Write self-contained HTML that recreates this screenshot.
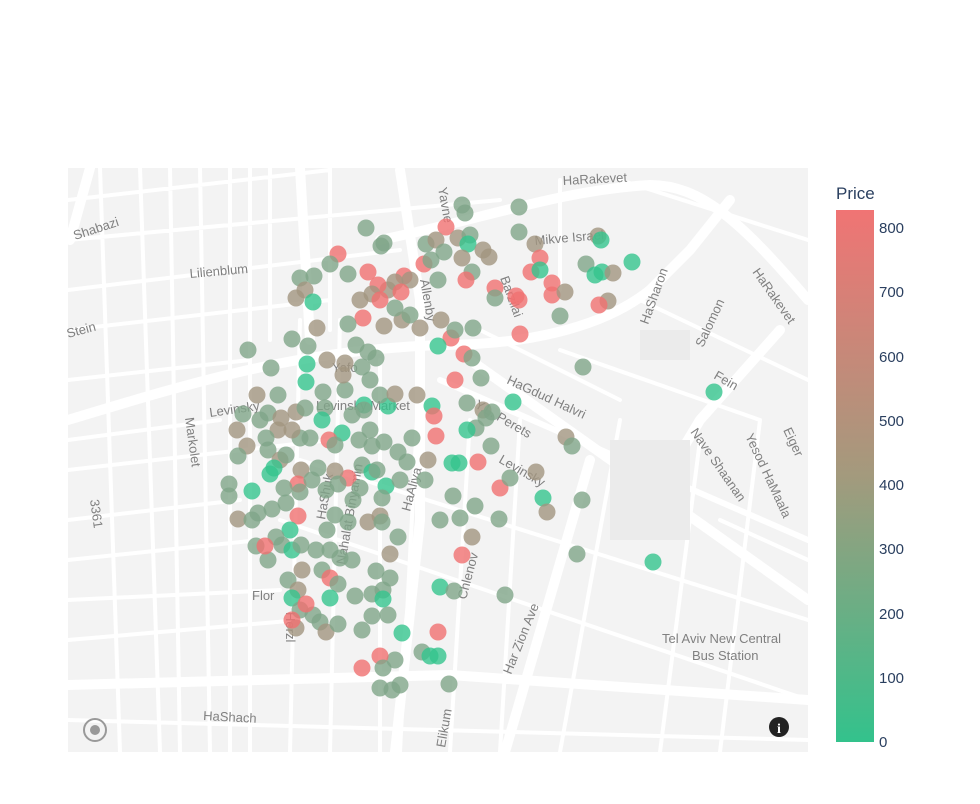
<!DOCTYPE html>
<html><head><meta charset="utf-8"><style>
body{margin:0;background:#fff;width:980px;height:804px;overflow:hidden;font-family:"Liberation Sans",sans-serif}
</style></head><body>
<svg width="980" height="804" viewBox="0 0 980 804" style="position:absolute;left:0;top:0">
<defs>
<linearGradient id="cb" x1="0" y1="0" x2="0" y2="1">
<stop offset="0" stop-color="#f07474"/><stop offset="0.5" stop-color="#a39a7d"/><stop offset="1" stop-color="#33c28c"/>
</linearGradient>
<clipPath id="mc"><rect x="68" y="168" width="740" height="584"/></clipPath>
</defs>
<rect x="68" y="168" width="740" height="584" fill="#f3f3f3"/>
<g clip-path="url(#mc)" fill="none" stroke="#fff" stroke-linecap="round">
<g stroke-width="4">
<path d="M68 200 L330 170 M68 240 L500 200 M68 290 L400 250 M68 330 L330 300 M68 470 L330 440 M68 520 L240 500 M68 560 L260 540 M68 600 L280 590 M68 640 L300 620 M68 720 L808 740 M140 168 L160 752 M100 168 L120 752 M200 168 L210 752 M250 168 L250 752 M300 320 L290 752 M340 320 L330 752 M380 360 L380 752 M420 360 L400 752 M470 420 L450 752 M520 420 L500 752 M620 420 L560 752 M700 440 L660 752 M760 420 L720 752 M300 460 L808 620 M280 520 L808 700 M480 330 L620 400 M560 350 L760 420 M620 180 L808 240 M560 180 L560 290 M330 168 L330 330 M270 168 L270 340 M640 300 L808 380 M720 520 L808 560 M68 380 L250 360 M68 440 L220 420 M170 168 L180 752 M230 168 L230 752"/>
</g>
<g stroke-width="10">
<path d="M68 420 C 200 380, 300 350, 440 345 C 520 345, 600 330, 650 290"/>
<path d="M380 240 C 480 220, 560 190, 650 185 C 700 185, 740 220, 808 300"/>
<path d="M470 360 L808 600"/>
<path d="M590 460 L505 752"/>
<path d="M68 685 L450 675 L808 700"/>
<path d="M650 290 L690 250 L730 200"/>
<path d="M780 330 L700 420 L640 520"/>
<path d="M400 170 L420 300 L420 520 L395 752"/>
<path d="M300 168 L310 340"/>
<path d="M90 168 L70 240"/>
<path d="M440 380 L808 540" stroke-width="6"/>
</g>
</g>
<rect x="610" y="440" width="80" height="100" fill="#ebebeb" clip-path="url(#mc)"/>
<rect x="640" y="330" width="50" height="30" fill="#ebebeb"/>
<g font-size="13" fill="#808080" font-family="'Liberation Sans',sans-serif">
<text x="75" y="240" transform="rotate(-18 75 240)">Shabazi</text>
<text x="190" y="278" transform="rotate(-5 190 278)">Lilienblum</text>
<text x="68" y="338" transform="rotate(-15 68 338)">Stein</text>
<text x="563" y="185" transform="rotate(-3 563 185)">HaRakevet</text>
<text x="535" y="245" transform="rotate(-5 535 245)">Mikve Israel</text>
<text x="210" y="417" transform="rotate(-8 210 417)">Levinsky</text>
<text x="185" y="418" transform="rotate(82 185 418)">Markolet</text>
<text x="90" y="500" transform="rotate(82 90 500)">3361</text>
<text x="506" y="383" transform="rotate(25 506 383)">HaGdud Halvri</text>
<text x="498" y="462" transform="rotate(30 498 462)">Levinsky</text>
<text x="474" y="407" transform="rotate(30 474 407)">Y.L. Perets</text>
<text x="410" y="512" transform="rotate(-75 410 512)">HaAliya</text>
<text x="466" y="600" transform="rotate(-75 466 600)">Chlenov</text>
<text x="511" y="675" transform="rotate(-68 511 675)">Har Zion Ave</text>
<text x="648" y="325" transform="rotate(-70 648 325)">HaSharon</text>
<text x="703" y="348" transform="rotate(-65 703 348)">Salomon</text>
<text x="752" y="272" transform="rotate(55 752 272)">HaRakevet</text>
<text x="713" y="378" transform="rotate(30 713 378)">Fein</text>
<text x="690" y="432" transform="rotate(55 690 432)">Nave Shaanan</text>
<text x="745" y="436" transform="rotate(65 745 436)">Yesod HaMaala</text>
<text x="783" y="430" transform="rotate(65 783 430)">Eiger</text>
<text x="662" y="643">Tel Aviv New Central</text>
<text x="692" y="660">Bus Station</text>
<text x="203" y="720" transform="rotate(3 203 720)">HaShach</text>
<text x="445" y="748" transform="rotate(-80 445 748)">Elikum</text>
<text x="252" y="600">Flor</text>
<text x="286" y="612" transform="rotate(90 286 612)">Herzl</text>
<text x="332" y="372">Yafo</text>
<text x="316" y="410">Levinsky Market</text>
<text x="438" y="188" transform="rotate(80 438 188)">Yavne</text>
<text x="420" y="280" transform="rotate(80 420 280)">Allenby</text>
<text x="500" y="278" transform="rotate(70 500 278)">Barzilai</text>
<text x="325" y="520" transform="rotate(-80 325 520)">HaShuk</text>
<text x="345" y="565" transform="rotate(-80 345 565)">Nahalat Binyamin</text>
</g>
<g id="dots"></g>
<circle cx="95" cy="730" r="11" fill="none" stroke="#999" stroke-width="2"/>
<circle cx="95" cy="730" r="5" fill="#999"/>
<circle cx="779" cy="727" r="10" fill="#222"/>
<text x="779" y="733" font-size="14" font-weight="bold" fill="#fff" text-anchor="middle" font-family="'Liberation Serif',serif">i</text>
<text x="836" y="199" font-size="17" fill="#2a3f5f">Price</text>
<rect x="836" y="210" width="38" height="532" fill="url(#cb)"/>
<g font-size="15" fill="#2a3f5f">
<text x="879" y="233">800</text><text x="879" y="297">700</text><text x="879" y="362">600</text><text x="879" y="426">500</text><text x="879" y="490">400</text><text x="879" y="554">300</text><text x="879" y="619">200</text><text x="879" y="683">100</text><text x="879" y="747">0</text>
</g>
</svg>
<script>
var C={g:"#35c48d",m:"#7fa588",b:"#a1957f",r:"#f07070"};
var d="366,228,m 381,246,m 384,243,m 338,254,r 462,205,m 465,213,m 519,207,m 519,232,m 446,227,r 426,244,m 436,240,b 444,252,m 458,238,b 470,235,m 468,244,g 483,250,b 489,257,b 535,244,b 540,258,r 598,236,b 601,240,g 632,262,g 586,264,m 595,275,g 602,272,g 613,273,b 608,301,b 599,305,r 531,272,r 540,270,g 552,283,r 552,295,r 565,292,b 560,316,m 519,300,r 516,296,r 520,334,r 495,288,r 495,298,m 472,272,m 466,280,r 462,258,b 438,280,m 424,264,r 404,276,r 395,282,b 388,290,b 378,285,r 372,294,b 368,272,r 348,274,m 300,278,m 314,276,m 330,264,m 305,290,b 296,298,b 313,302,g 380,300,r 363,318,r 348,324,m 384,326,b 402,320,b 410,315,m 420,328,b 441,320,b 473,328,m 451,338,r 438,346,g 464,354,r 472,358,m 455,380,r 481,378,m 317,328,b 292,339,m 308,346,m 307,364,g 248,350,m 271,368,m 278,395,m 306,382,g 257,395,b 243,414,m 268,413,m 281,418,b 296,412,b 323,392,m 325,408,m 322,420,g 345,390,m 343,375,b 345,363,b 362,367,m 376,358,m 370,380,m 364,405,g 388,406,g 380,395,m 395,394,b 364,410,m 417,395,b 432,406,g 436,436,r 434,416,r 467,403,m 483,410,b 492,412,m 486,418,m 513,402,g 476,428,m 467,430,g 491,446,m 478,462,r 459,463,g 452,463,g 428,460,b 412,438,m 398,452,m 384,442,m 372,446,m 359,440,m 342,433,g 329,440,r 310,438,m 300,438,m 292,430,b 278,430,b 260,420,m 237,430,b 247,446,b 238,456,m 266,438,m 268,450,m 280,460,b 286,455,m 301,470,b 298,484,r 284,488,m 270,474,g 274,468,g 252,491,g 229,484,m 229,496,m 238,519,b 252,520,m 258,513,m 272,509,m 286,503,m 300,492,m 298,516,r 290,530,g 276,537,m 256,546,m 268,560,m 265,546,r 282,545,m 292,550,g 301,545,m 316,550,m 330,550,m 340,558,m 352,560,m 348,478,r 362,465,m 372,472,g 360,488,m 377,470,m 386,486,g 382,498,m 380,516,b 368,522,b 382,522,m 398,537,m 390,554,b 353,500,m 335,471,b 318,468,m 312,480,m 326,490,m 338,484,m 348,522,m 335,515,m 327,530,m 322,570,m 330,578,r 338,584,m 302,570,b 288,580,m 298,590,b 292,598,g 300,610,m 313,615,m 320,622,m 326,632,b 338,624,m 296,628,b 292,620,r 306,604,r 330,598,g 355,596,m 362,630,m 376,571,m 390,578,m 383,590,m 372,594,m 383,599,g 388,615,m 372,616,m 402,633,g 440,587,g 454,591,m 462,555,r 472,537,b 460,518,m 453,496,m 475,506,m 499,519,m 500,488,r 510,478,m 536,472,b 543,498,g 547,512,b 582,500,m 566,437,b 572,446,m 583,367,m 714,392,g 577,554,m 653,562,g 505,595,m 438,632,r 422,652,m 430,656,g 438,656,g 395,660,m 380,656,r 383,668,m 362,668,r 380,688,m 400,685,m 392,690,m 449,684,m 455,330,m 431,260,m 410,280,b 401,292,r 395,308,m 360,300,b 327,360,b 305,408,m 356,345,m 368,352,m 370,430,m 352,415,m 335,445,m 400,480,m 407,462,m 425,480,m 440,520,m".split(" ");
var g=document.getElementById("dots"),s="";
d.forEach(function(t){var p=t.split(",");s+='<circle cx="'+p[0]+'" cy="'+p[1]+'" r="8.5" fill="'+C[p[2]]+'" fill-opacity="0.8"/>';});
g.innerHTML=s;
</script>
</body></html>
